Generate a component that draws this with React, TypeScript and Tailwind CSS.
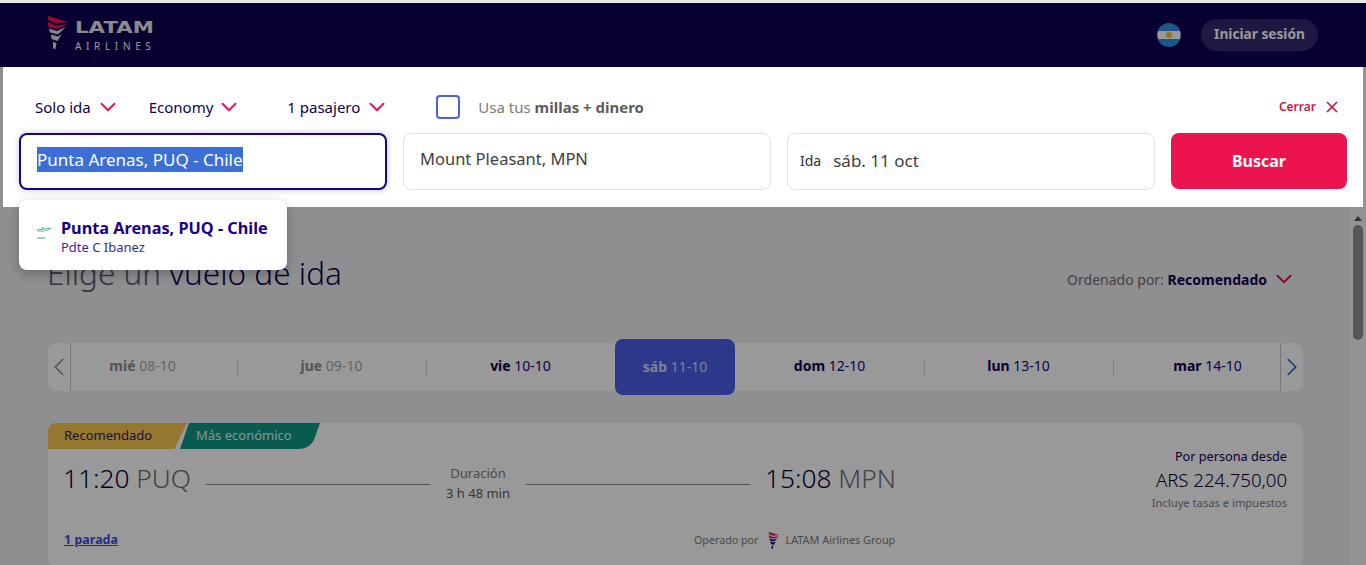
import React from "react";
import { ChevronDown, ChevronLeft, ChevronRight, X } from "lucide-react";

interface DayCell {
  day: string;
  date: string;
  muted?: boolean;
  active?: boolean;
}

const days: DayCell[] = [
  { day: "mié", date: "08-10", muted: true },
  { day: "jue", date: "09-10", muted: true },
  { day: "vie", date: "10-10" },
  { day: "sáb", date: "11-10", active: true },
  { day: "dom", date: "12-10" },
  { day: "lun", date: "13-10" },
  { day: "mar", date: "14-10" },
];

const Caret = ({ className }: { className: string }) => (
  <ChevronDown size={26} strokeWidth={1.9} className={`shrink-0 text-[#ed1650] ${className}`} />
);

const LogoMark = ({ className, colored }: { className: string; colored?: boolean }) => (
  <svg viewBox="0 0 20 33" className={className}>
    <path d="M0 0 L20 6 L8 7.5 L0 4 Z" fill="#ed1650" />
    <path d="M0 6 L8 9.5 L20 8 L9 13 L0 10.5 Z" fill="#ed1650" />
    <path d="M1 12.5 L9 15 L18 11 L10 18.5 L2 16.5 Z" fill={colored ? "#2a0088" : "#dcdce4"} />
    <path d="M3 18.5 L10 20.5 L14 18 L9.5 25 L3.5 23 Z" fill={colored ? "#2a0088" : "#dcdce4"} />
    <path d="M5 26 L8.5 27 L7.5 33 L5 32.5 Z" fill={colored ? "#2a0088" : "#dcdce4"} />
  </svg>
);

const Header = () => (
  <header className="flex h-[64px] items-center justify-between bg-[#0e0050] pl-12 pr-12">
    <div className="flex items-start gap-[7px]">
      <LogoMark className="mt-[-2px] h-[33px] w-[20px]" />
      <div className="flex flex-col pt-px">
        <span className="origin-left scale-x-[1.42] font-['DejaVu_Sans',sans-serif] text-[15px] leading-[18px] font-bold text-[#e8e8ee]">LATAM</span>
        <span className="mt-[3px] text-[10px] leading-[12px] tracking-[4.65px] text-white">AIRLINES</span>
      </div>
    </div>
    <div className="flex items-center gap-5">
      <svg viewBox="0 0 24 24" className="h-6 w-6">
        <circle cx="12" cy="12" r="12" fill="#2f8fe8" />
        <path d="M1.2 8 H22.8 A12 12 0 0 1 22.8 16 H1.2 A12 12 0 0 1 1.2 8 Z" fill="#ffffff" />
        <circle cx="12" cy="12" r="3" fill="#f5c518" />
      </svg>
      <button className="h-8 w-[117px] rounded-full bg-[#332a6f] pb-[1px] text-[13.7px] font-bold text-white">Iniciar sesión</button>
    </div>
  </header>
);

const DateStrip = () => (
  <div className="relative mt-[50px] flex h-12 rounded-lg bg-white">
    {days.map((d, i) =>
      d.active ? (
        <div key={d.date} className="-my-1 flex h-14 w-[120px] shrink-0 items-center justify-center rounded-lg bg-[#4a5fe8] pb-[2px] text-[14px] text-white/75">
          <span className="font-bold">{d.day}</span>&nbsp;{d.date}
        </div>
      ) : (
        <div key={d.date} className="flex w-[189px] shrink-0 items-center">
          <div className={`flex-1 pb-[3px] text-center text-[14px] ${d.muted ? "text-[#a8a8a8]" : "text-[#1b0088]"}`}>
            <span className={d.muted ? "font-bold text-[#8c8c8c]" : "font-bold text-[#10004f]"}>{d.day}</span>&nbsp;{d.date}
          </div>
          {i !== 2 && i !== 6 && <div className="-mr-px h-4 w-px bg-[#d5d5d5]" />}
        </div>
      )
    )}
    <div className="absolute inset-y-0 left-0 flex w-[23px] items-center justify-center border-r border-[#c8c8c8]">
      <ChevronLeft size={30} strokeWidth={1.3} className="shrink-0 text-[#8a8a8a]" />
    </div>
    <div className="absolute inset-y-0 right-0 flex w-[23px] items-center justify-center border-l border-[#c8c8c8]">
      <ChevronRight size={30} strokeWidth={1.3} className="shrink-0 text-[#3a4fd8]" />
    </div>
  </div>
);

const FlightCard = () => (
  <div className="mt-8 rounded-lg bg-white pb-4">
    <div className="flex h-[26px]">
      <div className="flex w-[139px] items-center rounded-tl-lg bg-[#fbc74f] pl-4 text-[13px] text-[#2c1e5c] [clip-path:polygon(0_0,100%_0,91%_100%,0_100%)]">
        Recomendado
      </div>
      <div className="-ml-[7px] flex w-[140px] items-center bg-[#0f9684] pl-[16px] text-[13px] text-[#e6f2ef] [clip-path:path('M0_26L9_0H140L135_14Q131_26_118_26Z')]">
        Más económico
      </div>
    </div>
    <div className="flex items-start px-4">
      <div className="-ml-px mt-[14px] w-[143px] text-[26.3px] leading-[30px] font-light text-[#070030]">
        11:20 <span className="text-[#6f6f6f]">PUQ</span>
      </div>
      <div className="mt-[35px] h-px w-[224px] bg-[#8c8c8c]" />
      <div className="mt-[14px] w-[96px] text-center text-[13px] leading-[20px]">
        <div className="text-[#7c7c7c]">Duración</div>
        <div className="text-[#5c5c5c]">3 h 48 min</div>
      </div>
      <div className="mt-[35px] h-px w-[224px] bg-[#8c8c8c]" />
      <div className="ml-[15px] mt-[14px] text-[26.3px] leading-[30px] font-light text-[#070030]">
        15:08 <span className="text-[#6f6f6f]">MPN</span>
      </div>
      <div className="ml-auto text-right">
        <div className="-mt-px text-[12.7px] leading-[16px] text-[#10004f]">Por persona desde</div>
        <div className="mt-[5px] text-[18.6px] leading-[22px] font-light text-[#070030]">ARS 224.750,00</div>
        <div className="mt-[5px] text-[11.2px] leading-[14px] text-[#7c7c7c]">Incluye tasas e impuestos</div>
      </div>
    </div>
    <div className="mt-[21px] flex items-center px-4">
      <a className="w-[630px] text-[12.5px] font-bold text-[#3a4fd8] underline">1 parada</a>
      <span className="text-[10.7px] text-[#7c7c7c]">Operado por</span>
      <LogoMark className="ml-[10px] h-[17px] w-[12px]" colored />
      <span className="ml-[5px] text-[10.9px] text-[#7c7c7c]">LATAM Airlines Group</span>
    </div>
  </div>
);

const Page = () => (
  <div className="flex flex-1 overflow-hidden bg-[#eeeef4]">
    <main className="min-w-0 flex-1 pl-12 pr-[47px]">
      <div className="flex items-end justify-between pt-[186px]">
        <h1 className="-ml-px text-[31.5px] leading-[40px] font-light text-[#5a5a6a]">
          Elige un <span className="text-[#10004f]">vuelo de ida</span>
        </h1>
        <div className="flex items-center pb-[1px] text-[14px] text-[#6f6f6f]">
          <span>
            Ordenado por: <span className="font-bold text-[#10004f]">Recomendado</span>
          </span>
          <Caret className="ml-[4px] mr-[6px]" />
        </div>
      </div>
      <DateStrip />
      <FlightCard />
    </main>
    <aside className="flex w-4 shrink-0 flex-col items-center bg-[#f6f6f6] pt-[149px]">
      <div className="h-0 w-0 border-x-[4px] border-b-[5px] border-x-transparent border-b-[#505050]" />
      <div className="mt-[4px] h-[115px] w-[10px] rounded-full bg-[#8f8f8f]" />
    </aside>
  </div>
);

const SearchPanel = () => (
  <div className="absolute inset-x-[3px] top-[64px] flex h-[140px] flex-col bg-white px-4 pt-[30px]">
    <div className="flex h-5 items-center text-[15px] text-[#10004f]">
      <span className="ml-4">Solo ida</span>
      <Caret className="ml-[4px]" />
      <span className="ml-[28px]">Economy</span>
      <Caret className="ml-[3px]" />
      <span className="ml-[45px]">1 pasajero</span>
      <Caret className="ml-[4px]" />
      <div className="ml-[46px] h-6 w-6 shrink-0 rounded-[4px] border-2 border-[#4a5fe8]" />
      <span className="ml-[18px] text-[#7c7c7c]">
        Usa tus <span className="font-bold text-[#5c5c5c]">millas + dinero</span>
      </span>
      <span className="ml-auto text-[12px] font-semibold text-[#d1133f]">Cerrar</span>
      <X size={18} strokeWidth={2.25} className="ml-[7px] mr-[6px] text-[#d1133f]" />
    </div>
    <div className="mt-[16px] flex gap-4">
      <div className="flex h-[57px] w-[368px] items-center rounded-lg border-2 border-[#1b0088] px-4 pb-[4px] text-[17px] text-[#303030] shadow-[0_0_6px_rgba(27,0,136,0.25)]">
        <span className="bg-[#3b6fd6] text-white">Punta Arenas, PUQ - Chile</span>
      </div>
      <div className="flex h-[57px] w-[368px] items-center rounded-lg border border-[#e2e2e2] px-4 pb-[5px] text-[16.5px] text-[#404040]">
        Mount Pleasant, MPN
      </div>
      <div className="flex h-[57px] w-[368px] items-center rounded-lg border border-[#e2e2e2] px-3 pb-[2px] text-[14px] text-[#303030]">
        Ida<span className="ml-3 text-[17px] text-[#404040]">sáb. 11 oct</span>
      </div>
      <button className="h-[56px] flex-1 rounded-lg bg-[#ec144e] text-[16px] font-bold text-white">Buscar</button>
    </div>
    <div className="absolute left-4 top-[133px] flex h-[70px] w-[268px] items-center gap-[9px] rounded-lg bg-white pl-[17px] shadow-[0_4px_12px_rgba(0,0,0,0.25)]">
      <svg viewBox="0 0 16 16" className="mb-[6px] h-4 w-4" fill="none" stroke="#3a9d8f" strokeWidth="0.8">
        <path d="M1 6.5 C4 8 10 7 15 4.5 C13 3.5 11 4.5 9 5 L6 3.5 L7 5.5 L3 5.5 L1 6.5 Z" />
        <path d="M1 14 H9" strokeWidth="1" />
      </svg>
      <div className="pt-[3px]">
        <div className="text-[16.25px] leading-[20px] font-bold text-[#1b0088]">Punta Arenas, PUQ - Chile</div>
        <div className="text-[13px] leading-[18px] text-[#3a2a9c]">Pdte C Ibanez</div>
      </div>
    </div>
  </div>
);

export default function App() {
  return (
    <div className="relative flex h-screen flex-col overflow-hidden bg-[#eaeaea] pt-[3px] font-['Noto_Sans',sans-serif]">
      <Header />
      <Page />
      <div className="absolute inset-x-0 bottom-0 top-[3px] bg-black/40">
        <SearchPanel />
      </div>
    </div>
  );
}
